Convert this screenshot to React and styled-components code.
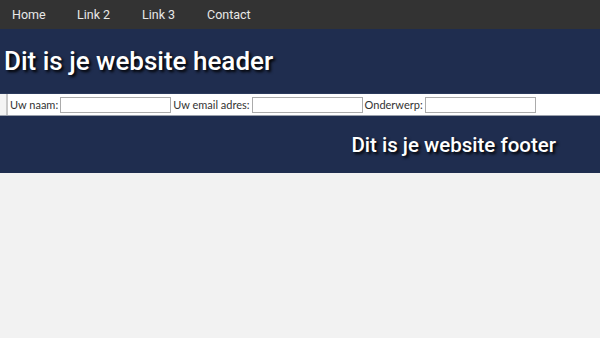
import styled, { createGlobalStyle } from "styled-components";

const Global = createGlobalStyle`
    body {
        margin: 0;
        background: #f2f2f2;
        font-family: 'Roboto', sans-serif;
    }
`

export default function App() {
    return (
        <>
            <Global />
            <Nav>
                <NavLink>Home</NavLink>
                <NavLink>Link 2</NavLink>
                <NavLink>Link 3</NavLink>
                <NavLink>Contact</NavLink>
            </Nav>
            <Header>
                <HeaderTitle>Dit is je website header</HeaderTitle>
            </Header>
            <FormRow>
                <Gutter />
                <Form>
                    <Label>Uw naam:</Label>
                    <Input type="text" />
                    <Label>Uw email adres:</Label>
                    <Input type="text" />
                    <Label>Onderwerp:</Label>
                    <Input type="text" />
                </Form>
            </FormRow>
            <Footer>
                <FooterTitle>Dit is je website footer</FooterTitle>
            </Footer>
        </>
    )
}

const Nav = styled.nav`
    display: flex;
    align-items: center;
    height: 29px;
    background-color: #333333;
    padding-left: 12px;
`

const NavLink = styled.a`
    width: 65px;
    color: #e8e8e8;
    font-family: 'Roboto', sans-serif;
    font-size: 12.5px;
    cursor: pointer;
`

const Header = styled.header`
    background-color: #1f2d4f;
    height: 64px;
    display: flex;
    align-items: center;
    border-bottom: 1px solid #2b3a5c;
`

const HeaderTitle = styled.h1`
    margin: 0 0 0 4px;
    color: #ffffff;
    font-family: 'Roboto', sans-serif;
    font-weight: 500;
    font-size: 26px;
    text-shadow: 2px 2px 3px #000;
`

const FormRow = styled.div`
    display: flex;
    height: 21px;
    background: #ffffff;
    border-bottom: 1px solid #9aa0ac;
`

const Gutter = styled.div`
    width: 6px;
    background: #f4f4f4;
    border-right: 2px solid #c8c8c8;
`

const Form = styled.form`
    display: flex;
    align-items: center;
    padding-left: 2px;
`

const Label = styled.label`
    font-family: 'Lato', sans-serif;
    font-size: 11px;
    color: #333;
    margin-right: 2px;
`

const Input = styled.input`
    width: 107px;
    height: 12px;
    border: 1px solid #ababab;
    padding: 1px;
    margin: 0 2px 0 0;
    background: #fff;
`

const Footer = styled.footer`
    background-color: #1f2d4f;
    height: 57px;
    display: flex;
    align-items: center;
    justify-content: flex-end;
    padding-right: 44px;
`

const FooterTitle = styled.h2`
    margin: 0;
    color: #ffffff;
    font-family: 'Roboto', sans-serif;
    font-weight: 500;
    font-size: 20.5px;
    text-shadow: 2px 2px 3px #000;
`
